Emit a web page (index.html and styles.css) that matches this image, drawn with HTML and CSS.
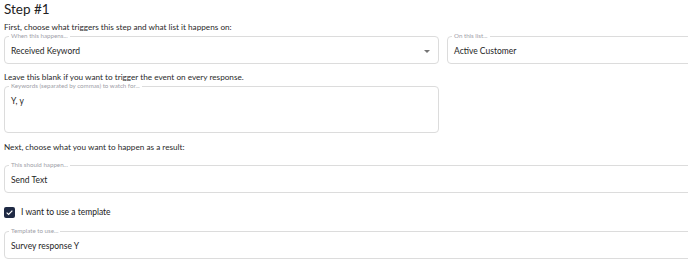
FILE: index.html
```html
<!DOCTYPE html>
<html lang="en">
<head>
    <meta charset="UTF-8">
    <meta name="viewport" content="width=device-width, initial-scale=1.0">
    <title>Step #1</title>
    <link rel="stylesheet" href="styles.css">
</head>
<body>
    <div class="step">
        <h2 class="step-title">Step #1</h2>

        <p class="hint">First, choose what triggers this step and what list it happens on:</p>
        <div class="field-row">
            <fieldset class="field">
                <legend>When this happens...</legend>
                <div class="field-value select">
                    <span>Received Keyword</span>
                    <span class="caret"></span>
                </div>
            </fieldset>
            <fieldset class="field">
                <legend>On this list...</legend>
                <div class="field-value">Active Customer</div>
            </fieldset>
        </div>

        <p class="hint second">Leave this blank if you want to trigger the event on every response.</p>
        <fieldset class="field textarea">
            <legend>Keywords (separated by commas) to watch for...</legend>
            <div class="field-value">Y, y</div>
        </fieldset>

        <p class="hint third">Next, choose what you want to happen as a result:</p>
        <fieldset class="field wide">
            <legend>This should happen...</legend>
            <div class="field-value">Send Text</div>
        </fieldset>

        <label class="check">
            <span class="box">
                <svg viewBox="0 0 12 12" width="9" height="9"><path d="M2.2 6.2 L4.8 8.6 L9.8 3.4" fill="none" stroke="#fff" stroke-width="1.6"/></svg>
            </span>
            I want to use a template
        </label>

        <fieldset class="field wide">
            <legend>Template to use...</legend>
            <div class="field-value">Survey response Y</div>
        </fieldset>
    </div>
</body>
</html>
```

FILE: styles.css
```css
body {
    margin: 0;
    padding: 0;
    font-family: Lato, "Noto Sans", sans-serif;
    color: #212121;
    background-color: #fff;
    overflow: hidden;
}
.step {
    width: 878px;
    padding: 0 4px;
}
.step-title {
    margin: 0;
    padding-top: 1px;
    font-size: 13.5px;
    font-weight: 400;
    line-height: 17px;
    color: #222;
}
.hint {
    margin: 3px 0 0;
    font-size: 8.2px;
    line-height: 12px;
    color: #2a2a2a;
}
.hint.second {
    margin-top: 7px;
}
.hint.third {
    margin-top: 8px;
}
.field-row {
    display: grid;
    grid-template-columns: 435px 435px;
    gap: 8px;
}
.field {
    margin: 0;
    padding: 0 6px;
    border: 1px solid #dcdcdc;
    border-radius: 4px;
    height: 31px;
    box-sizing: border-box;
    min-width: 0;
}
.field legend {
    font-size: 6.2px;
    line-height: 6px;
    color: #a0a0a8;
    padding: 0 2px;
    margin-left: -2px;
}
.field-value {
    padding-top: 1px;
    font-size: 8.5px;
    line-height: 22px;
    color: #1e1e1e;
}
.select {
    display: flex;
    justify-content: space-between;
    align-items: center;
}
.caret {
    width: 0;
    height: 0;
    border-left: 3px solid transparent;
    border-right: 3px solid transparent;
    border-top: 3px solid #757575;
    margin-right: 2px;
}
.textarea {
    width: 435px;
    height: 50px;
}
.wide {
    width: 100%;
    margin-top: 9px;
}
.check {
    display: flex;
    align-items: center;
    gap: 6px;
    height: 14px;
    margin-top: 12px;
    font-size: 8.5px;
    color: #222;
}
.box {
    width: 11px;
    height: 11px;
    border-radius: 2px;
    background-color: #1f2a44;
    display: flex;
    align-items: center;
    justify-content: center;
}
```
